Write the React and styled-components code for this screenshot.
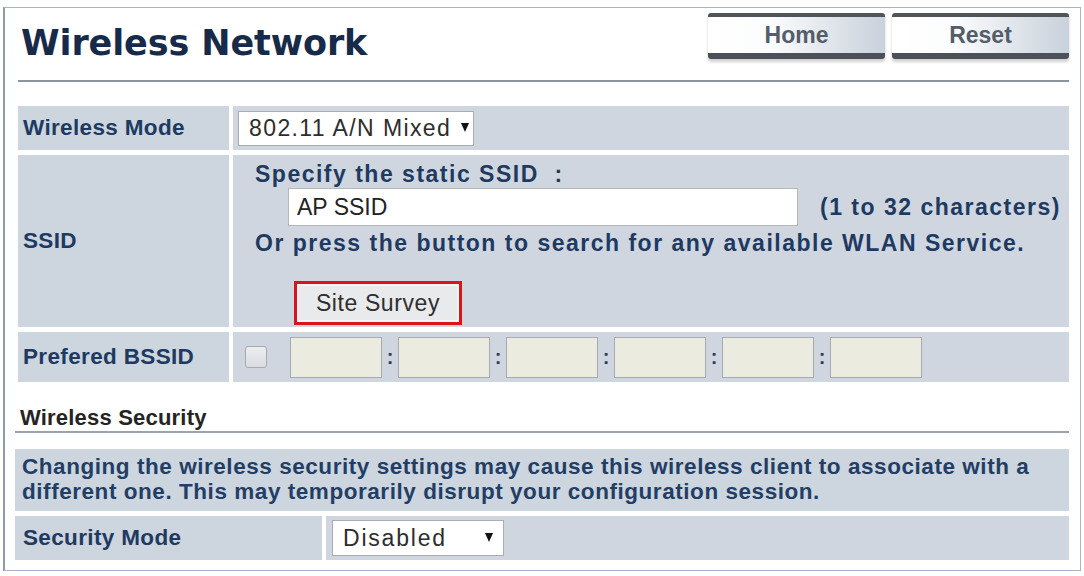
import React from "react";
import styled, { createGlobalStyle } from "styled-components";

const GlobalStyle = createGlobalStyle`
  html, body {
    margin: 0;
    padding: 0;
    background: #ffffff;
  }
  body {
    font-family: "Liberation Sans", Arial, sans-serif;
  }
`;

const Frame = styled.div`
  box-sizing: border-box;
  width: 1078px;
  height: 564px;
  margin: 7px 0 0 3px;
  padding: 0 11px 0 10px;
  border: 1px solid #a9b4c2;
  border-left: 2px solid #8e9cb0;
  background: #fff;
`;

const Header = styled.div`
  display: flex;
  justify-content: space-between;
  align-items: flex-start;
  height: 72px;
  margin-left: 3px;
  padding-left: 2px;
  border-bottom: 2px solid #8b949f;
`;

const Title = styled.h1`
  margin: 15px 0 0 1px;
  font-family: "DejaVu Sans", Verdana, sans-serif;
  font-size: 35px;
  font-weight: bold;
  color: #172a4a;
  letter-spacing: -0.1px;
`;

const ButtonGroup = styled.div`
  display: flex;
  gap: 7px;
  padding-top: 5px;
`;

const TabButton = styled.button`
  box-sizing: border-box;
  width: 177px;
  height: 46px;
  border: none;
  border-top: 4px solid #50545b;
  border-bottom: 6px solid #4c5058;
  border-radius: 3px;
  background: linear-gradient(to right, #ffffff 0%, #fbfcfd 35%, #c9d1dc 100%);
  box-shadow: 0 3px 3px rgba(0, 0, 0, 0.18);
  font-family: "Liberation Sans", Arial, sans-serif;
  font-weight: bold;
  font-size: 23px;
  color: #555d69;
  padding: 0;
`;

const Table = styled.div`
  display: grid;
  grid-template-columns: ${(p) => p.$label}px 1fr;
  column-gap: 4px;
  row-gap: 5px;
  margin: ${(p) => p.$top || 0}px 0 0 ${(p) => p.$left || 0}px;
`;

const LabelCell = styled.div`
  display: flex;
  align-items: center;
  background: #cdd5df;
  padding-left: ${(p) => p.$pad ?? 5}px;
  font-weight: bold;
  font-size: 22.5px;
  letter-spacing: 0.35px;
  color: #1f3a60;
  height: ${(p) => (p.$h ? `${p.$h}px` : "auto")};
`;

const ValueCell = styled.div`
  display: flex;
  align-items: center;
  background: #cfd6e0;
  padding-left: ${(p) => p.$pad ?? 5}px;
`;

const SelectBox = styled.div`
  box-sizing: border-box;
  display: flex;
  align-items: center;
  width: ${(p) => p.$w}px;
  height: ${(p) => p.$h}px;
  padding: 0 0 0 10px;
  background: #fff;
  border: 1px solid #a9adb3;
  font-size: 23px;
  letter-spacing: ${(p) => p.$ls}px;
  color: #2d2d2d;
  white-space: nowrap;
  gap: ${(p) => p.$gap}px;
`;

const Arrow = styled.span`
  width: 0;
  height: 0;
  border-left: 4px solid transparent;
  border-right: 4px solid transparent;
  border-top: 9px solid #111;
  margin-top: -2px;
`;

const SsidCell = styled.div`
  background: #cfd6e0;
  padding: 6px 0 0 22px;
  font-weight: bold;
  font-size: 23px;
  letter-spacing: 1.5px;
  color: #1f3a60;
`;

const Line = styled.div`
  height: ${(p) => p.$h}px;
  line-height: ${(p) => p.$h}px;
  white-space: nowrap;
`;

const InputRow = styled.div`
  display: flex;
  align-items: center;
  padding-left: 33px;
  height: 40px;
`;

const TextInput = styled.input`
  box-sizing: border-box;
  width: 510px;
  height: 38px;
  border: 1px solid #b4b8bd;
  background: #fff;
  padding: 0 8px;
  font-family: "Liberation Sans", Arial, sans-serif;
  font-size: 23px;
  color: #222;
  outline: none;
`;

const Hint = styled.span`
  margin-left: 22px;
  letter-spacing: 1.5px;
`;

const SurveyWrap = styled.div`
  padding: 22px 0 0 39px;
`;

const SurveyButton = styled.button`
  box-sizing: border-box;
  width: 168px;
  height: 44px;
  border: 3px solid #d9141d;
  background: #e9eaec;
  box-shadow: inset 0 0 0 2px #f4f4f4;
  font-family: "Liberation Sans", Arial, sans-serif;
  font-size: 23px;
  letter-spacing: 0.6px;
  color: #2e2e2e;
  padding: 0;
`;

const Check = styled.span`
  box-sizing: border-box;
  width: 22px;
  height: 22px;
  margin-right: 23px;
  border: 1px solid #a6abb1;
  border-radius: 3px;
  background: linear-gradient(#eceef0, #d9dcdf);
`;

const MacInput = styled.input`
  box-sizing: border-box;
  width: 92px;
  height: 41px;
  border: 1px solid #a7abaf;
  background: #ebebe0;
  outline: none;
`;

const Colon = styled.span`
  width: 16px;
  text-align: center;
  font-weight: bold;
  font-size: 20px;
  color: #2c3f5f;
`;

const SectionTitle = styled.div`
  margin: 22px 0 0 0;
  height: 27px;
  padding-left: 5px;
  border-bottom: 2px solid #9aa2ac;
  font-weight: bold;
  font-size: 22px;
  letter-spacing: 0.2px;
  color: #242424;
  display: flex;
  align-items: center;
`;

const Notice = styled.div`
  margin: 16px 0 5px 0;
  height: 62px;
  box-sizing: border-box;
  padding: 5px 0 0 7px;
  background: #cdd5df;
  font-weight: bold;
  font-size: 22.5px;
  line-height: 25px;
  letter-spacing: 0.55px;
  color: #233e65;
  white-space: nowrap;
`;

const macs = [0, 1, 2, 3, 4, 5];

export default function App() {
  return (
    <>
      <GlobalStyle />
      <Frame>
        <Header>
          <Title>Wireless Network</Title>
          <ButtonGroup>
            <TabButton>Home</TabButton>
            <TabButton>Reset</TabButton>
          </ButtonGroup>
        </Header>

        <Table $label={211} $top={24} $left={3}>
          <LabelCell $h={44}>Wireless Mode</LabelCell>
          <ValueCell $pad={5}>
            <SelectBox $w={236} $h={35} $gap={10} $ls={1.4}>
              802.11 A/N Mixed <Arrow />
            </SelectBox>
          </ValueCell>

          <LabelCell $h={172}>SSID</LabelCell>
          <SsidCell>
            <Line $h={26}>Specify the static SSID&nbsp;&nbsp;:</Line>
            <InputRow>
              <TextInput defaultValue="AP SSID" readOnly />
              <Hint>(1 to 32 characters)</Hint>
            </InputRow>
            <Line $h={32}>Or press the button to search for any available WLAN Service.</Line>
            <SurveyWrap>
              <SurveyButton>Site Survey</SurveyButton>
            </SurveyWrap>
          </SsidCell>

          <LabelCell $h={50}>Prefered BSSID</LabelCell>
          <ValueCell $pad={12}>
            <Check />
            {macs.map((m) => (
              <React.Fragment key={m}>
                <MacInput disabled />
                {m < 5 && <Colon>:</Colon>}
              </React.Fragment>
            ))}
          </ValueCell>
        </Table>

        <SectionTitle>Wireless Security</SectionTitle>
        <Notice>
          Changing the wireless security settings may cause this wireless client to associate with a
          <br />
          different one. This may temporarily disrupt your configuration session.
        </Notice>

        <Table $label={307}>
          <LabelCell $h={44} $pad={8}>Security Mode</LabelCell>
          <ValueCell $pad={6}>
            <SelectBox $w={172} $h={36} $gap={38} $ls={1.8}>
              Disabled <Arrow />
            </SelectBox>
          </ValueCell>
        </Table>
      </Frame>
    </>
  );
}
